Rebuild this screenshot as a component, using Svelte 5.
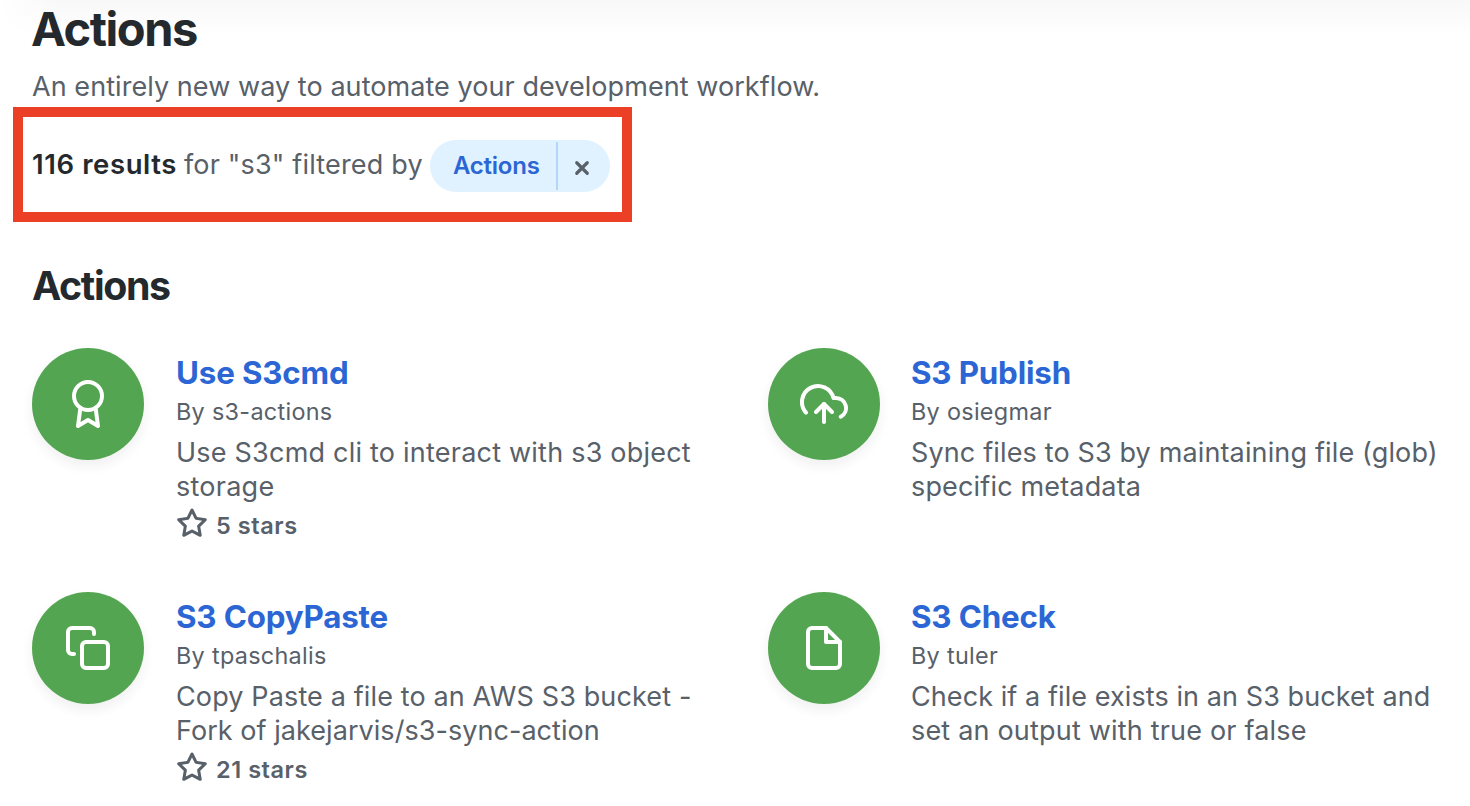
<script>
  // Each description line carries its own tracking, in pixels.
  const items = [
    { icon: 'award', title: 'Use S3cmd', by: 'By s3-actions', lines: [['Use S3cmd cli to interact with s3 object', 0.22], ['storage', 0.25]], stars: '5 stars' },
    { icon: 'upload', title: 'S3 Publish', by: 'By osiegmar', lines: [['Sync files to S3 by maintaining file (glob)', 0.14], ['specific metadata', 0.16]] },
    { icon: 'copy', title: 'S3 CopyPaste', by: 'By tpaschalis', lines: [['Copy Paste a file to an AWS S3 bucket -', 0.13], ['Fork of jakejarvis/s3-sync-action', 0.05]], stars: '21 stars' },
    { icon: 'file', title: 'S3 Check', by: 'By tuler', lines: [['Check if a file exists in an S3 bucket and', 0.08], ['set an output with true or false', 0.19]] }
  ];
</script>

<main>
  <h1>Actions</h1>
  <p class="lead">An entirely new way to automate your development workflow.</p>

  <div class="results">
    <span class="count">116 results</span>
    <span class="for">for "s3" filtered by</span>
    <span class="pill">
      <a href="#actions">Actions</a>
      <button aria-label="Remove filter">
        <svg width="16" height="16" viewBox="0 0 16 16"><path d="M2.75 2.75l10.5 10.5M13.25 2.75l-10.5 10.5" /></svg>
      </button>
    </span>
  </div>

  <h2 id="actions">Actions</h2>

  <div class="grid">
    {#each items as item}
      <article>
        <div class="circle">
          <svg width="48" height="48" viewBox="0 0 24 24">
            {#if item.icon === 'award'}
              <circle cx="12" cy="8" r="7" />
              <polyline points="8.21 13.89 7 23 12 20 17 23 15.79 13.88" />
            {:else if item.icon === 'upload'}
              <polyline points="16 16 12 12 8 16" />
              <line x1="12" y1="12" x2="12" y2="21" />
              <path d="M20.39 18.39A5 5 0 0 0 18 9h-1.26A8 8 0 1 0 3 16.3" />
            {:else if item.icon === 'copy'}
              <rect x="9" y="9" width="13" height="13" rx="2" />
              <path d="M5 15H4a2 2 0 0 1-2-2V4a2 2 0 0 1 2-2h9a2 2 0 0 1 2 2v1" />
            {:else}
              <path d="M13 2H6a2 2 0 0 0-2 2v16a2 2 0 0 0 2 2h12a2 2 0 0 0 2-2V9z" />
              <polyline points="13 2 13 9 20 9" />
            {/if}
          </svg>
        </div>
        <div class="body">
          <h3>{item.title}</h3>
          <div class="by">{item.by}</div>
          <p class="desc">{#each item.lines as [line, tracking]}<span style:letter-spacing="{tracking}px">{line}</span>{/each}</p>
          {#if item.stars}
            <div class="stars">
              <svg width="32" height="32" viewBox="0 0 16 16"><path fill-rule="evenodd" d="M8 .25a.75.75 0 01.673.418l1.882 3.815 4.21.612a.75.75 0 01.416 1.279l-3.046 2.97.719 4.192a.75.75 0 01-1.088.791L8 12.347l-3.766 1.98a.75.75 0 01-1.088-.79l.72-4.194L.818 6.374a.75.75 0 01.416-1.28l4.21-.611L7.327.668A.75.75 0 018 .25zm0 2.445L6.615 5.5a.75.75 0 01-.564.41l-3.097.45 2.24 2.184a.75.75 0 01.216.664l-.528 3.084 2.769-1.456a.75.75 0 01.698 0l2.77 1.456-.53-3.084a.75.75 0 01.216-.664l2.24-2.183-3.096-.45a.75.75 0 01-.564-.41L8 2.694v.001z" /></svg>
              <span>{item.stars}</span>
            </div>
          {/if}
        </div>
      </article>
    {/each}
  </div>
</main>

<style>
  :global(body) { background: #fff; overflow: hidden; }
  main {
    box-sizing: border-box;
    width: 1470px;
    height: 806px;
    overflow: hidden;
    font-family: Inter, sans-serif;
    font-size: 27px;
    color: #586069;
    white-space: nowrap;
    background: linear-gradient(90deg, #fff, rgba(255, 255, 255, 0) 60px), linear-gradient(#f8f8f8, #fff 36px);
  }
  h1, h2, h3, p { margin: 0; }
  h1 { padding-left: 31px; height: 66px; line-height: 58px; font-size: 47px; font-weight: 650; letter-spacing: -1.45px; color: #24292e; }
  .lead { padding-left: 32px; height: 41px; line-height: 41px; letter-spacing: 0.06px; }
  .results {
    box-sizing: border-box;
    display: flex;
    align-items: center;
    width: 619px;
    height: 115px;
    margin-left: 13px;
    padding-left: 9px;
    border: 10px solid #eb4026;
  }
  .count { width: 152px; padding-bottom: 2px; font-size: 27.5px; font-weight: 620; letter-spacing: 0.6px; color: #24292e; }
  .for { width: 246px; letter-spacing: 0.17px; }
  .pill { display: flex; align-items: center; width: 180px; height: 52px; border-radius: 26px; background: #e0f2ff; position: relative; top: 1px; }
  .pill a { box-sizing: border-box; width: 126px; padding-left: 23px; font-size: 24px; font-weight: 560; letter-spacing: -0.25px; color: #2c66d4; text-decoration: none; }
  .pill button { display: flex; align-items: center; justify-content: center; width: 54px; height: 48px; padding: 4px 4px 0 0; border: 0; border-left: 2px solid #b4d6fb; background: none; }
  .pill svg { fill: none; stroke: #586069; stroke-width: 3.2; stroke-linecap: round; flex: none; }
  h2 { margin-top: 36px; padding-left: 32px; height: 90px; line-height: 56px; font-size: 39.3px; font-weight: 650; letter-spacing: -1.35px; color: #24292e; }
  .grid { display: grid; grid-template-columns: 736px 1fr; grid-auto-rows: 244px; padding-left: 32px; }
  article { display: flex; gap: 32px; }
  article:nth-child(even) { gap: 31px; }
  .circle { display: flex; align-items: center; justify-content: center; width: 112px; height: 112px; border-radius: 50%; background: #54a551; box-shadow: 0 6px 12px rgba(36, 41, 46, 0.07); flex: none; }
  .circle svg { fill: none; stroke: #fff; stroke-width: 2; stroke-linecap: round; stroke-linejoin: round; }
  h3 { margin-top: 3px; height: 44px; line-height: 44px; font-size: 31.3px; font-weight: 650; letter-spacing: -0.15px; color: #2c66d4; }
  .by { height: 34px; line-height: 34px; font-size: 23.4px; letter-spacing: 0.3px; }
  .desc { margin-top: 7px; line-height: 34px; }
  .desc span { display: block; }
  .stars { display: flex; gap: 8px; height: 36px; margin-top: 4px; line-height: 36px; font-size: 23.5px; font-weight: 600; letter-spacing: 0.55px; }
  .stars svg { fill: #586069; }
</style>
